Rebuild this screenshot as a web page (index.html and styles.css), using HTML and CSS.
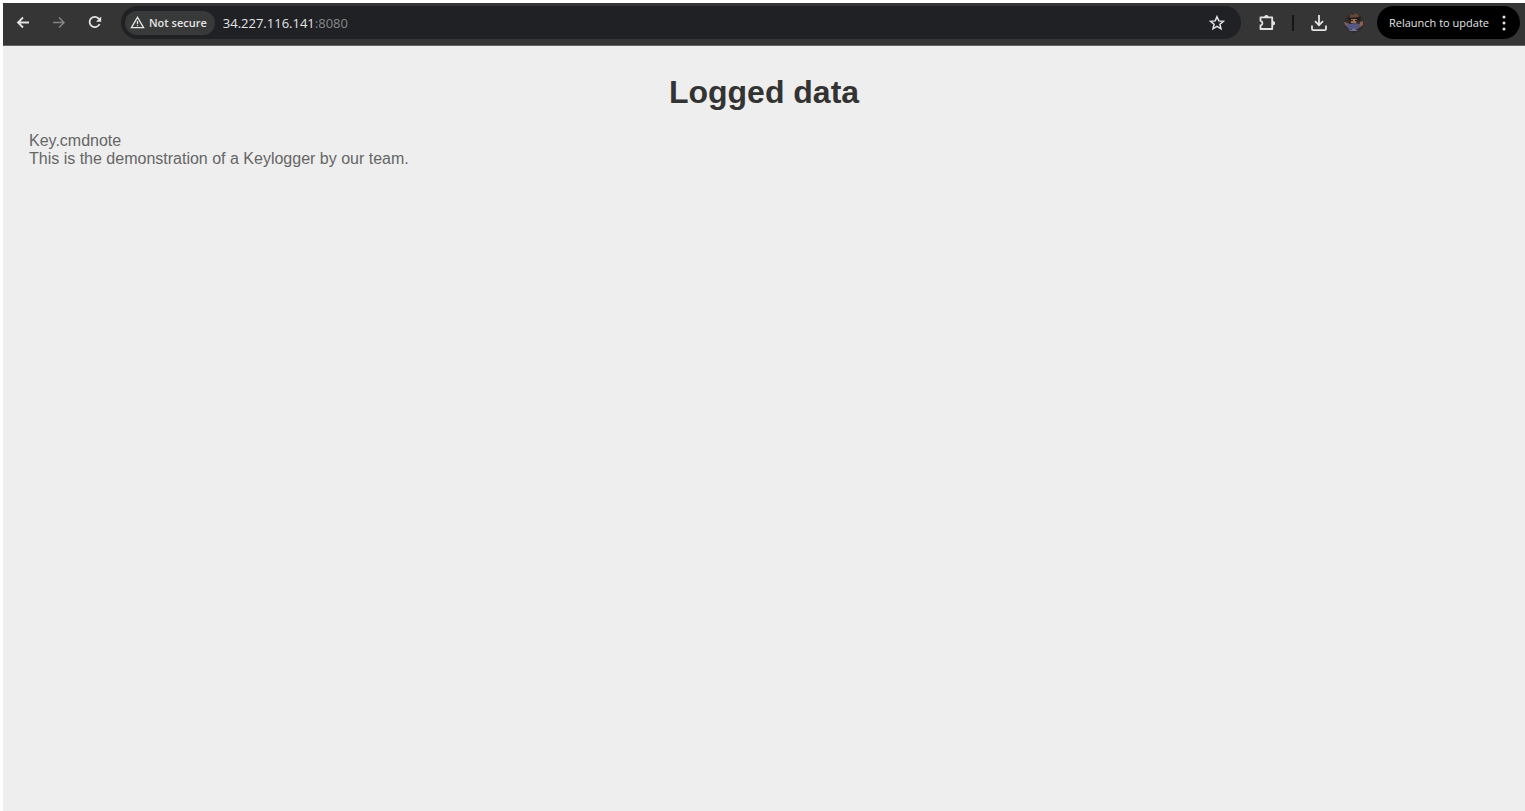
FILE: index.html
```html
<!DOCTYPE html>
<html lang="en">
<head>
<meta charset="utf-8">
<meta name="viewport" content="width=device-width, initial-scale=1">
<title>Logged data</title>
<link rel="stylesheet" href="styles.css">
</head>
<body>
<div class="window">
  <header class="toolbar">
    <nav class="nav" aria-label="History">
      <button class="icon-button" type="button" aria-label="Back">
        <svg class="icon" viewBox="0 0 16 16"><path d="M14 7.500H3M8 2.500l-5 5 5 5"/></svg>
      </button>
      <button class="icon-button icon-button--dim" type="button" aria-label="Forward">
        <svg class="icon" viewBox="0 0 16 16"><path class="thin" d="M2 7.500h11M8 2.500l5 5-5 5"/></svg>
      </button>
      <button class="icon-button" type="button" aria-label="Reload">
        <svg class="icon" viewBox="0 0 16 16"><path d="M12.600 9A5.200 5.200 0 1 1 12 3.900L13.300 5.200"/><path class="solid" d="M14.200 1.500v5.200H9z"/></svg>
      </button>
    </nav>
    <div class="address">
      <button class="security" type="button">
        <svg class="icon icon--warning" viewBox="0 0 16 16"><path d="M8 2.500L14.500 13.500h-13zM8 6.300v3.500M8 10.800v1.200"/></svg>
        <span>Not secure</span>
      </button>
      <a class="url" href="#">34.227.116.141<span class="port">:8080</span></a>
      <button class="icon-button" type="button" aria-label="Bookmark this page">
        <svg class="icon" viewBox="0 0 16 16"><path class="thin" d="M8 1.700l1.800 4.200 4.600.4-3.500 3 1.100 4.500L8 11.400l-4 2.400 1.100-4.500-3.500-3 4.600-.4z"/></svg>
      </button>
    </div>
    <div class="actions">
      <button class="icon-button" type="button" aria-label="Extensions">
        <svg class="icon icon--large" viewBox="0 0 18 18"><path stroke-linejoin="round" d="M2.500 3.300h11.700v11.700H2.500v-3.500c2.600-.6 2.600-4.100 0-4.700z"/><path class="solid" d="M6.100 3.500a2.300 2.600 0 0 1 4.600 0zM14.500 6.900a2.600 2.300 0 0 1 0 4.600z"/></svg>
      </button>
      <span class="divider"></span>
      <button class="icon-button" type="button" aria-label="Downloads">
        <svg class="icon icon--large" viewBox="0 0 18 18"><path d="M9 1v10M5 7.200l4 4 4-4M2 11.500V15q0 1.200 1.200 1.200h11.600q1.200 0 1.200-1.200v-3.500"/></svg>
      </button>
      <button class="icon-button" type="button" aria-label="Profile">
        <svg class="avatar" viewBox="0 0 22 22">
          <circle cx="11" cy="11" r="10" fill="#302d2c"/>
          <path d="M7 2l3 1 2-2 4 2-1 4H7z" fill="#65473a"/>
          <path d="M4 6l14-1-2 4H7z" fill="#251a1a"/>
          <path d="M8 7h6l-1 4H8z" fill="#a06f52"/>
          <path d="M2 10l5 2 5-1 5 1-2 5H6l-3-3z" fill="#555782"/>
          <path d="M1 10l3 1 1 3-3-1zM17 10l3-1v4l-4 3z" fill="#8a604b"/>
          <path d="M5 17l3 1 3-2 4 3H7z" fill="#72739c"/>
          <path d="M8 8h2v1H8zM12 8h2v1h-2z" fill="#211d26"/>
        </svg>
      </button>
      <button class="relaunch" type="button">
        <span>Relaunch to update</span>
        <svg class="more" viewBox="0 0 4 16"><circle cx="2" cy="2" r="1.500"/><circle cx="2" cy="8" r="1.500"/><circle cx="2" cy="14" r="1.500"/></svg>
      </button>
    </div>
  </header>
  <main class="page">
    <h1 class="title">Logged data</h1>
    <p class="log">Key.cmdnote<br>This is the demonstration of a Keylogger by our team.</p>
  </main>
</div>
</body>
</html>
```
FILE: styles.css
```css
* {
  box-sizing: border-box;
}

body {
  margin: 0;
  background: #fff;
  font-family: "Liberation Sans", Arial, sans-serif;
}

button {
  border: 0;
  padding: 0;
  background: none;
  color: inherit;
  font: inherit;
}

.window {
  display: flex;
  flex-direction: column;
  min-height: 100vh;
  padding: 3px 0 0 3px;
}

.toolbar {
  display: flex;
  align-items: center;
  padding: 3px 5px 6px 8px;
  border-bottom: 1px solid #626262;
  background: #353535;
  color: #e4e4e4;
  font-family: "Open Sans", "Noto Sans", sans-serif;
  font-size: 11px;
}

.nav {
  display: flex;
  gap: 12px;
  margin-right: 14px;
}

.icon-button {
  display: flex;
  flex: none;
  align-items: center;
  justify-content: center;
  width: 24px;
  height: 24px;
}

.icon-button--dim {
  color: #858585;
}

.icon {
  width: 16px;
  height: 16px;
  fill: none;
  stroke: currentColor;
  stroke-width: 1.8;
}

.icon--large {
  width: 18px;
  height: 18px;
}

.icon--warning {
  width: 15px;
  height: 15px;
  stroke-width: 1.4;
}

.thin {
  stroke-width: 1.5;
}

.solid {
  fill: currentColor;
  stroke: none;
}

.address {
  display: flex;
  flex: 1;
  align-items: center;
  height: 33px;
  padding: 0 12px 0 4px;
  border-radius: 17px;
  background: #202124;
}

.security {
  display: flex;
  align-items: center;
  gap: 4px;
  height: 24px;
  padding: 0 8px 0 5px;
  border-radius: 12px;
  background: #383a3a;
  font-weight: 600;
}

.url {
  flex: 1;
  margin-left: 8px;
  color: #e4e4e4;
  font-size: 13px;
  text-decoration: none;
}

.port {
  color: #85878a;
}

.actions {
  display: flex;
  align-items: center;
  gap: 11px;
  margin-left: 14px;
}

.divider {
  width: 2px;
  height: 16px;
  margin: 0 2px;
  background: #161616;
}

.avatar {
  width: 22px;
  height: 22px;
}

.relaunch {
  display: flex;
  align-items: center;
  gap: 13px;
  height: 33px;
  padding: 0 14px 0 12px;
  border-radius: 17px;
  background: #000;
}

.more {
  width: 4px;
  height: 16px;
  fill: currentColor;
}

.page {
  flex: 1;
  padding: 27px 26px;
  background: #eee;
}

.title {
  margin: 0 0 21px;
  color: #333;
  font-size: 32px;
  line-height: 38px;
  text-align: center;
}

.log {
  margin: 0;
  color: #666;
  font-size: 16px;
  line-height: 18px;
}
```
